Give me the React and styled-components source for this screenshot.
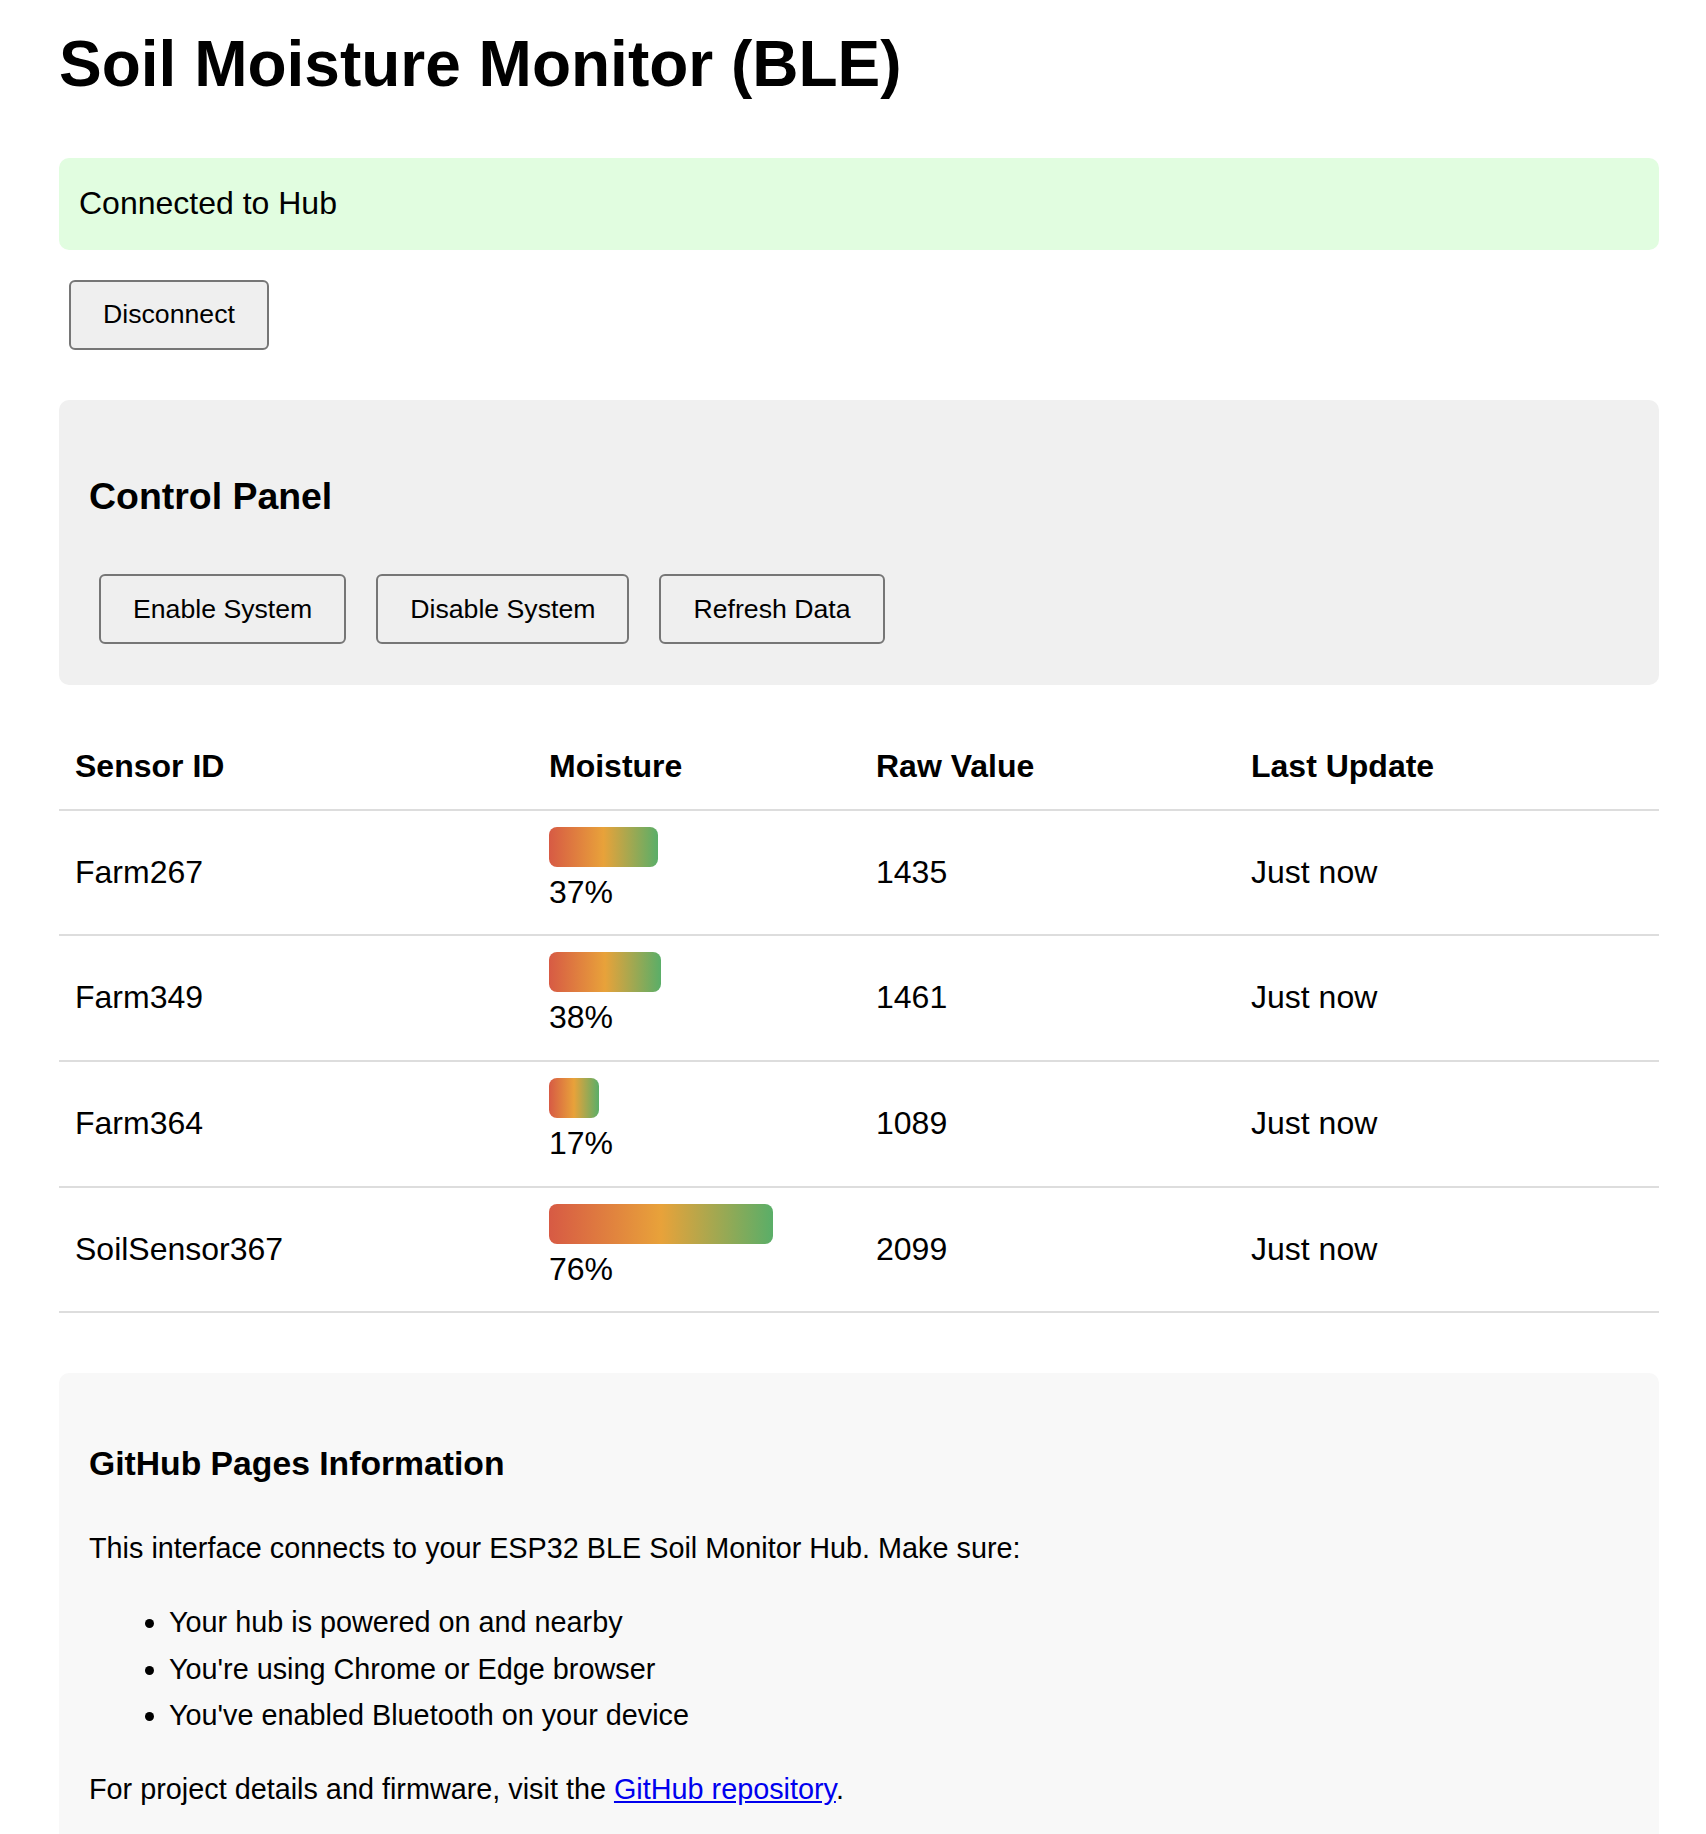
import React from 'react';
import styled, { createGlobalStyle } from 'styled-components';

const GlobalStyle = createGlobalStyle`
  body {
    margin: 0;
    background: #fff;
    color: #000;
    font-family: "Liberation Sans", Arial, Helvetica, sans-serif;
    font-size: 32px;
    line-height: 1.6;
  }

  * {
    box-sizing: border-box;
  }
`;

const Container = styled.div`
  width: 1600px;
  margin-left: 59px;
`;

const Title = styled.h1`
  font-size: 64px;
  font-weight: bold;
  line-height: 1.6;
  margin: 13px 0 43px;
`;

const Status = styled.div`
  background: #e1fde0;
  border-radius: 10px;
  padding: 20px;
  margin-bottom: 20px;
`;

const ButtonRow = styled.div`
  display: flex;
  gap: 30px;
  padding: 10px;
`;

const Button = styled.button`
  height: 70px;
  padding: 0 32px;
  border: 2px solid #767676;
  border-radius: 6px;
  background: #efefef;
  color: #000;
  font-family: "Liberation Sans", Arial, Helvetica, sans-serif;
  font-size: 26.67px;
  line-height: normal;
  cursor: pointer;

  &:hover {
    background: #e5e5e5;
  }
`;

const Panel = styled.section`
  background: ${p => p.$bg};
  border-radius: 10px;
  padding: 30px 30px 31px;
  margin-top: ${p => p.$top}px;
  font-size: ${p => p.$size}px;
`;

const PanelTitle = styled.h3`
  font-size: 1.17em;
  font-weight: bold;
  margin: 1em 0;
`;

const Table = styled.table`
  width: 100%;
  border-collapse: collapse;
  margin-top: 40px;
`;

const Th = styled.th`
  width: ${p => p.$width}px;
  padding: 16px;
  text-align: left;
  font-weight: bold;
  border-bottom: 2px solid #ddd;
`;

const Td = styled.td`
  padding: 16px 16px 16.5px;
  border-bottom: 2px solid #ddd;
  vertical-align: middle;
`;

const Bar = styled.div`
  height: 40px;
  border-radius: 8px;
  background: linear-gradient(to right, #d75a44, #e8a23a, #5aae68);
`;

const Paragraph = styled.p`
  margin: 1em 0;
`;

const List = styled.ul`
  margin: 1em 0;
  padding-left: 80px;
`;

const Link = styled.a`
  color: #0000ee;
  text-decoration: underline;
`;

const sensors = [
  { id: 'Farm267', moisture: 37, raw: 1435 },
  { id: 'Farm349', moisture: 38, raw: 1461 },
  { id: 'Farm364', moisture: 17, raw: 1089 },
  { id: 'SoilSensor367', moisture: 76, raw: 2099 },
];

const App = () => (
  <>
    <GlobalStyle />
    <Container>
      <Title>Soil Moisture Monitor (BLE)</Title>
      <Status>Connected to Hub</Status>
      <ButtonRow>
        <Button>Disconnect</Button>
      </ButtonRow>

      <Panel $bg="#f0f0f0" $top={40} $size={32}>
        <PanelTitle>Control Panel</PanelTitle>
        <ButtonRow>
          <Button>Enable System</Button>
          <Button>Disable System</Button>
          <Button>Refresh Data</Button>
        </ButtonRow>
      </Panel>

      <Table>
        <thead>
          <tr>
            <Th $width={474}>Sensor ID</Th>
            <Th $width={327}>Moisture</Th>
            <Th $width={375}>Raw Value</Th>
            <Th $width={424}>Last Update</Th>
          </tr>
        </thead>
        <tbody>
          {sensors.map(s => (
            <tr key={s.id}>
              <Td>{s.id}</Td>
              <Td>
                <Bar style={{ width: `${s.moisture}%` }} />
                {s.moisture}%
              </Td>
              <Td>{s.raw}</Td>
              <Td>Just now</Td>
            </tr>
          ))}
        </tbody>
      </Table>

      <Panel $bg="#f8f8f8" $top={60} $size={28.8}>
        <PanelTitle>GitHub Pages Information</PanelTitle>
        <Paragraph>This interface connects to your ESP32 BLE Soil Monitor Hub. Make sure:</Paragraph>
        <List>
          <li>Your hub is powered on and nearby</li>
          <li>You're using Chrome or Edge browser</li>
          <li>You've enabled Bluetooth on your device</li>
        </List>
        <Paragraph>
          For project details and firmware, visit the <Link href="#">GitHub repository</Link>.
        </Paragraph>
      </Panel>
    </Container>
  </>
);

export default App;
